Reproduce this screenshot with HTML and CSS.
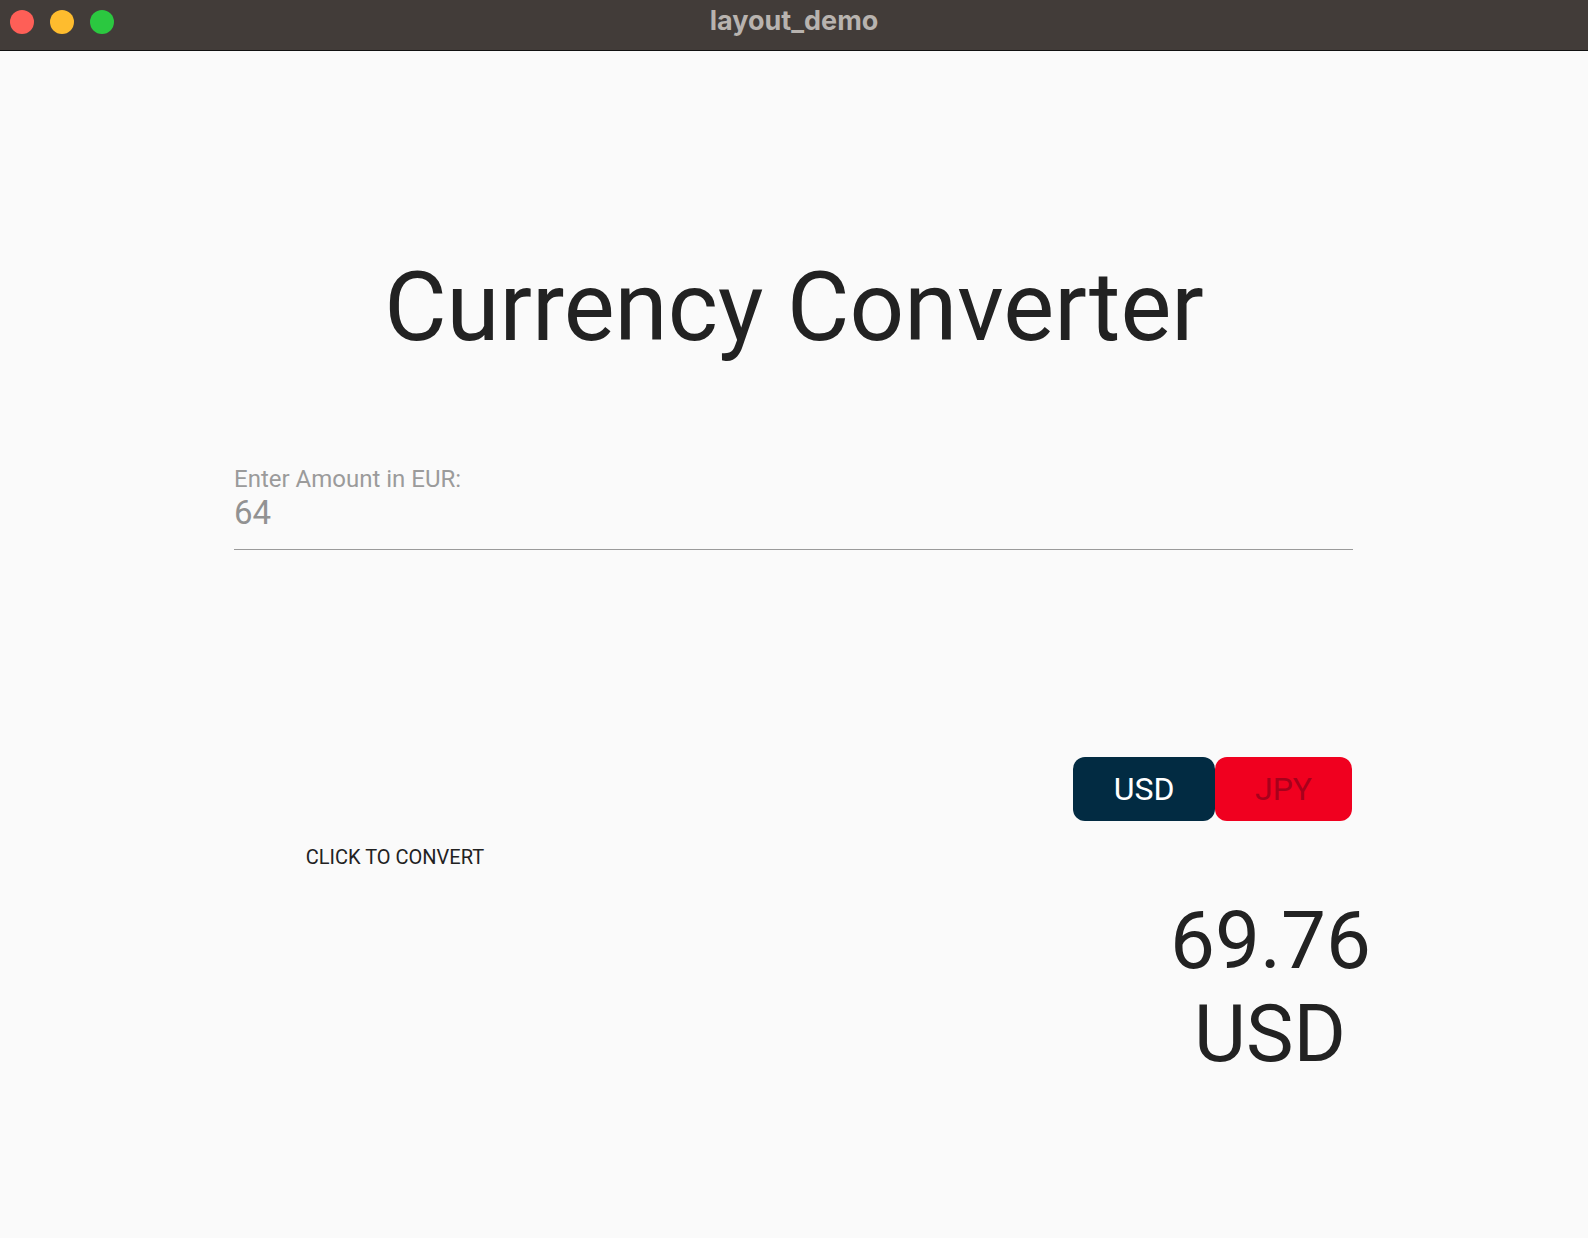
FILE: index.html
```html
<!DOCTYPE html>
<html>
<head>
<meta charset="utf-8">
<link rel="stylesheet" href="styles.css">
</head>
<body>
<div class="window">
  <header class="titlebar">
    <div class="lights">
      <span class="light red"></span>
      <span class="light yellow"></span>
      <span class="light green"></span>
    </div>
    <div class="wintitle">layout_demo</div>
  </header>
  <main class="app">
    <h1 class="title">Currency Converter</h1>
    <div class="field">
      <div class="label">Enter Amount in EUR:</div>
      <div class="value">64</div>
    </div>
    <div class="row">
      <div class="left">
        <button class="convert">CLICK TO CONVERT</button>
      </div>
      <div class="right">
        <div class="toggle">
          <button class="cur usd">USD</button>
          <button class="cur jpy">JPY</button>
        </div>
        <div class="result">69.76<br>USD</div>
      </div>
    </div>
  </main>
</div>
</body>
</html>
```

FILE: styles.css
```css
* { box-sizing: border-box; }
html, body { margin: 0; padding: 0; }
body {
  width: 1588px;
  height: 1238px;
  background: #fafafa;
  font-family: Roboto, "Noto Sans", sans-serif;
  overflow: hidden;
}
.window { display: flex; flex-direction: column; height: 100%; }
.titlebar {
  height: 51px;
  background: #423c39;
  border-bottom: 1px solid #111;
  display: flex;
  align-items: flex-start;
  position: relative;
}
.lights { display: flex; gap: 16px; padding: 10px 0 0 10px; }
.light { width: 24px; height: 24px; border-radius: 50%; display: block; }
.red { background: #fe5f57; }
.yellow { background: #febc2e; }
.green { background: #2bc840; }
.wintitle {
  position: absolute;
  left: 0; right: 0; top: 0;
  text-align: center;
  line-height: 42px;
  font-family: "Inter", "Liberation Sans", sans-serif;
  font-weight: 700;
  font-size: 27px;
  color: #b8b3af;
}
.app {
  flex: 1;
  padding: 0 234px;
  display: flex;
  flex-direction: column;
}
.title {
  margin: 208px 0 0;
  font-weight: 400;
  font-size: 96px;
  line-height: 1;
  text-align: center;
  color: #222;
}
.field {
  margin-top: 112px;
  border-bottom: 1px solid #9a9a9a;
  padding-bottom: 20px;
  width: 1119px;
}
.label { font-size: 24px; line-height: 1; color: #9b9b9b; }
.value { margin-top: 5px; font-size: 33px; line-height: 1; color: #929292; }
.row { display: flex; margin-top: 207px; width: 1119px; }
.left { width: 322px; display: flex; justify-content: center; padding-top: 90px; }
.convert {
  border: 0; background: none; padding: 0;
  font-family: Roboto, sans-serif;
  font-size: 20px; line-height: 1; color: #222;
  height: 20px;
}
.right { flex: 1; display: flex; flex-direction: column; align-items: flex-end; }
.toggle { display: flex; margin-right: 1px; }
.cur {
  height: 64px;
  border: 0;
  border-radius: 12px;
  font-family: Roboto, sans-serif;
  font-size: 32px;
}
.usd { width: 142px; background: #022b42; color: #fff; }
.jpy { width: 137px; background: #f0001f; color: #a8001b; }
.result {
  margin-top: 74px;
  margin-right: -17px;
  width: 200px;
  text-align: center;
  font-size: 80px;
  line-height: 93px;
  color: #222;
}
```
